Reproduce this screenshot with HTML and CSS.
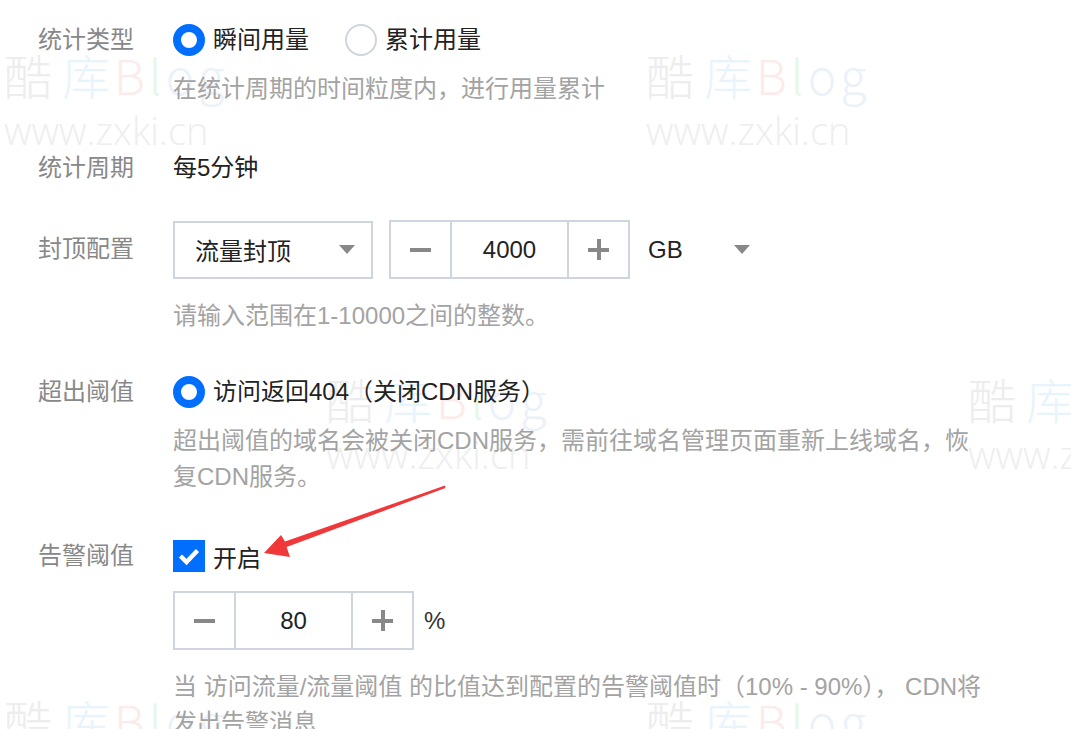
FILE: index.html
```html
<!DOCTYPE html>
<html lang="zh-CN">
<head>
    <meta charset="UTF-8">
    <meta name="viewport" content="width=device-width, initial-scale=1.0">
    <title>用量封顶配置</title>
    <link rel="stylesheet" href="styles.css">
</head>
<body>
<div class="page">
    <!-- 水印 -->
    <div class="wm wm-1"><div class="wm-logo"><span class="c1">酷</span><span class="c2">库</span><span class="c3">B</span><span class="c4">l</span><span class="c5">og</span></div><div class="wm-url">www.zxki.cn</div></div>
    <div class="wm wm-2"><div class="wm-logo"><span class="c1">酷</span><span class="c2">库</span><span class="c3">B</span><span class="c4">l</span><span class="c5">og</span></div><div class="wm-url">www.zxki.cn</div></div>
    <div class="wm wm-3"><div class="wm-logo"><span class="c1">酷</span><span class="c2">库</span><span class="c3">B</span><span class="c4">l</span><span class="c5">og</span></div><div class="wm-url">www.zxki.cn</div></div>
    <div class="wm wm-4"><div class="wm-logo"><span class="c1">酷</span><span class="c2">库</span><span class="c3">B</span><span class="c4">l</span><span class="c5">og</span></div><div class="wm-url">www.zxki.cn</div></div>
    <div class="wm wm-5"><div class="wm-logo"><span class="c1">酷</span><span class="c2">库</span><span class="c3">B</span><span class="c4">l</span><span class="c5">og</span></div><div class="wm-url">www.zxki.cn</div></div>
    <div class="wm wm-6"><div class="wm-logo"><span class="c1">酷</span><span class="c2">库</span><span class="c3">B</span><span class="c4">l</span><span class="c5">og</span></div><div class="wm-url">www.zxki.cn</div></div>

    <div class="form">
        <!-- 统计类型 -->
        <div class="form-item item-type">
            <div class="form-label">统计类型</div>
            <div class="form-control">
                <div class="radio-group">
                    <label class="radio is-checked"><span class="radio-icon"></span>瞬间用量</label>
                    <label class="radio"><span class="radio-icon"></span>累计用量</label>
                </div>
                <p class="form-help help-radio">在统计周期的时间粒度内，进行用量累计</p>
            </div>
        </div>

        <!-- 统计周期 -->
        <div class="form-item item-period">
            <div class="form-label">统计周期</div>
            <div class="form-control">
                <div class="form-text">每5分钟</div>
            </div>
        </div>

        <!-- 封顶配置 -->
        <div class="form-item item-cap">
            <div class="form-label label-tall">封顶配置</div>
            <div class="form-control">
                <div class="control-row">
                    <div class="select">
                        <span>流量封顶</span>
                        <span class="caret"></span>
                    </div>
                    <div class="input-number">
                        <span class="step step-minus"><i class="icon-minus"></i></span>
                        <span class="input-value">4000</span>
                        <span class="step step-plus"><i class="icon-plus"></i></span>
                    </div>
                    <div class="unit-select">
                        <span>GB</span>
                        <span class="caret"></span>
                    </div>
                </div>
                <p class="form-help help-input">请输入范围在1-10000之间的整数。</p>
            </div>
        </div>

        <!-- 超出阈值 -->
        <div class="form-item item-over">
            <div class="form-label">超出阈值</div>
            <div class="form-control">
                <div class="radio-group">
                    <label class="radio is-checked"><span class="radio-icon"></span>访问返回404（关闭CDN服务）</label>
                </div>
                <p class="form-help help-radio">超出阈值的域名会被关闭CDN服务，需前往域名管理页面重新上线域名，恢复CDN服务。</p>
            </div>
        </div>

        <!-- 告警阈值 -->
        <div class="form-item item-alarm">
            <div class="form-label">告警阈值</div>
            <div class="form-control">
                <label class="checkbox is-checked">
                    <span class="checkbox-icon">
                        <svg width="32" height="32" viewBox="0 0 32 32"><polyline points="7.5,16 13.5,22 24.5,10.5" fill="none" stroke="#fff" stroke-width="4.5"/></svg>
                    </span>开启
                </label>
                <div class="control-row row-alarm">
                    <div class="input-number">
                        <span class="step step-minus"><i class="icon-minus"></i></span>
                        <span class="input-value">80</span>
                        <span class="step step-plus"><i class="icon-plus"></i></span>
                    </div>
                    <span class="unit-text">%</span>
                </div>
                <p class="form-help help-input">当 访问流量/流量阈值 的比值达到配置的告警阈值时（10% - 90%）， CDN将发出告警消息</p>
            </div>
        </div>
    </div>

    <!-- 红色箭头标注 -->
    <svg class="arrow" width="1071" height="729" viewBox="0 0 1071 729">
        <polygon points="445,485.6 285,541.6 281,535 264,553 290,557 286.6,547 445.4,488" fill="#f0373a"/>
    </svg>
</div>
</body>
</html>
```

FILE: styles.css
```css
html,
body {
    margin: 0;
    overflow: hidden;
}

body {
    font-family: "Liberation Sans", "Noto Sans CJK SC", sans-serif;
    font-size: 24px;
    color: #222;
    background-color: #fff;
}

.page {
    position: relative;
    width: 1071px;
    height: 729px;
    overflow: hidden;
    padding: 22px 0 0 38px;
    box-sizing: border-box;
}

.form {
    position: relative;
    z-index: 1;
    display: flex;
    flex-direction: column;
}

.form-item {
    display: flex;
}

.item-type { margin-bottom: 43px; }
.item-period { margin-bottom: 34px; }
.item-cap { margin-bottom: 40px; }
.item-over { margin-bottom: 43px; }

.form-label {
    width: 135px;
    flex-shrink: 0;
    line-height: 36px;
    color: #888;
}

.label-tall {
    line-height: 58px;
}

.form-control {
    flex: 1;
}

.form-text {
    line-height: 36px;
}

.form-help {
    margin: 0;
    max-width: 816px;
    line-height: 36px;
    color: #a3a3a3;
}

.help-radio { margin-top: 13px; }
.help-input { margin-top: 19px; }

/* 单选 */
.radio-group {
    display: flex;
    gap: 36px;
    height: 36px;
}

.radio {
    display: inline-flex;
    align-items: center;
    gap: 8px;
    line-height: 36px;
    cursor: pointer;
}

.radio-icon {
    width: 32px;
    height: 32px;
    box-sizing: border-box;
    border-radius: 50%;
    border: 2px solid #cfd5de;
    background-color: #fff;
}

.radio.is-checked .radio-icon {
    border: 8px solid #006eff;
}

/* 复选 */
.checkbox {
    display: flex;
    align-items: center;
    gap: 8px;
    height: 36px;
    cursor: pointer;
}

.checkbox-icon {
    width: 32px;
    height: 32px;
    background-color: #006eff;
    display: block;
}

.checkbox-icon svg {
    display: block;
}

/* 下拉与数字输入 */
.control-row {
    display: flex;
    align-items: center;
    gap: 16px;
}

.row-alarm {
    margin-top: 17px;
    gap: 10px;
}

.select {
    width: 200px;
    height: 58px;
    box-sizing: border-box;
    border: 2px solid #cfd5de;
    display: flex;
    align-items: center;
    justify-content: space-between;
    padding: 0 16px 0 20px;
    background-color: #fff;
}

.caret {
    width: 0;
    height: 0;
    border-left: 8px solid transparent;
    border-right: 8px solid transparent;
    border-top: 9px solid #888;
}

.input-number {
    height: 59px;
    box-sizing: border-box;
    border: 2px solid #cfd5de;
    display: flex;
    background-color: #fff;
}

.step {
    width: 59px;
    display: flex;
    align-items: center;
    justify-content: center;
    cursor: pointer;
}

.step-minus {
    border-right: 2px solid #cfd5de;
}

.step-plus {
    border-left: 2px solid #cfd5de;
}

.icon-minus,
.icon-plus {
    position: relative;
    width: 21px;
    height: 21px;
}

.icon-minus::before,
.icon-plus::before,
.icon-plus::after {
    content: "";
    position: absolute;
    background-color: #888;
}

.icon-minus::before,
.icon-plus::before {
    left: 0;
    right: 0;
    top: 9px;
    height: 4px;
}

.icon-plus::after {
    top: 0;
    bottom: 0;
    left: 9px;
    width: 4px;
}

.input-value {
    width: 115px;
    display: flex;
    align-items: center;
    justify-content: center;
    color: #222;
}

.unit-select {
    width: 104px;
    height: 58px;
    box-sizing: border-box;
    display: flex;
    align-items: center;
    justify-content: space-between;
    padding: 0 0 0 2px;
}

.unit-text {
    color: #333;
}

/* 水印 */
.wm {
    position: absolute;
    z-index: 0;
    pointer-events: none;
    width: 210px;
}

.wm-logo {
    font-size: 48px;
    line-height: 56px;
    font-family: "Noto Sans CJK SC", sans-serif;
    font-weight: 300;
    white-space: nowrap;
}

.wm-logo .c1 { color: #ededed; margin-right: 10px; }
.wm-logo .c2 { color: #e7f4fc; margin-right: 4px; }
.wm-logo .c3 { color: #fdebe9; letter-spacing: 4px; }
.wm-logo .c4 { color: #e6f7e6; letter-spacing: 4px; }
.wm-logo .c5 { color: #ebf1f9; letter-spacing: 4px; }

.wm-url {
    font-family: "Open Sans", sans-serif;
    font-weight: 300;
    font-size: 38px;
    line-height: 40px;
    color: #eeeeee;
    margin-top: 8px;
}

.wm-1 { left: 4px; top: 46px; }
.wm-2 { left: 646px; top: 46px; }
.wm-3 { left: 326px; top: 370px; }
.wm-4 { left: 968px; top: 370px; }
.wm-5 { left: 4px; top: 692px; }
.wm-6 { left: 646px; top: 692px; }

.arrow {
    position: absolute;
    left: 0;
    top: 0;
    z-index: 2;
    pointer-events: none;
}
```
